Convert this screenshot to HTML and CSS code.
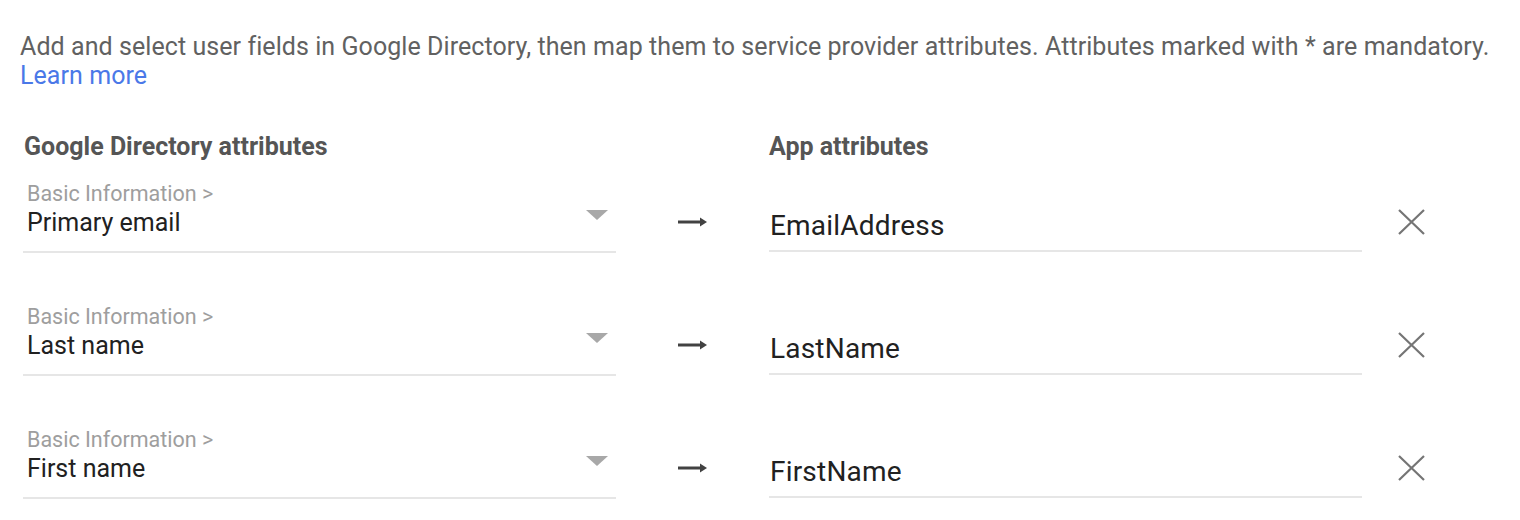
FILE: index.html
```html
<!DOCTYPE html>
<html lang="en">
<head>
<meta charset="utf-8">
<link rel="stylesheet" href="styles.css">
</head>
<body>
<div class="page">
  <p class="desc">Add and select user fields in Google Directory, then map them to service provider attributes. Attributes marked with * are mandatory.<br><a class="link" href="#">Learn more</a></p>
  <div class="grid">
    <div class="head">Google Directory attributes</div>
    <div></div>
    <div class="head head-right">App attributes</div>
    <div></div>

    <div class="select">
      <div class="sel-text">
        <div class="sel-label">Basic Information &gt;</div>
        <div class="sel-value">Primary email</div>
      </div>
      <span class="caret"></span>
    </div>
    <div class="arrow-cell"><svg class="arrow" width="30" height="12" viewBox="0 0 30 12"><path d="M0 6h24" stroke="#424242" stroke-width="3"/><path d="M22 1.5l7 4.5-7 4.5z" fill="#424242"/></svg></div>
    <div class="input"><span>EmailAddress</span></div>
    <div class="close-cell"><svg width="27" height="26" viewBox="0 0 27 26"><path d="M1 1L26 25M26 1L1 25" stroke="#757575" stroke-width="2.2"/></svg></div>

    <div class="select">
      <div class="sel-text">
        <div class="sel-label">Basic Information &gt;</div>
        <div class="sel-value">Last name</div>
      </div>
      <span class="caret"></span>
    </div>
    <div class="arrow-cell"><svg class="arrow" width="30" height="12" viewBox="0 0 30 12"><path d="M0 6h24" stroke="#424242" stroke-width="3"/><path d="M22 1.5l7 4.5-7 4.5z" fill="#424242"/></svg></div>
    <div class="input"><span>LastName</span></div>
    <div class="close-cell"><svg width="27" height="26" viewBox="0 0 27 26"><path d="M1 1L26 25M26 1L1 25" stroke="#757575" stroke-width="2.2"/></svg></div>

    <div class="select">
      <div class="sel-text">
        <div class="sel-label">Basic Information &gt;</div>
        <div class="sel-value">First name</div>
      </div>
      <span class="caret"></span>
    </div>
    <div class="arrow-cell"><svg class="arrow" width="30" height="12" viewBox="0 0 30 12"><path d="M0 6h24" stroke="#424242" stroke-width="3"/><path d="M22 1.5l7 4.5-7 4.5z" fill="#424242"/></svg></div>
    <div class="input"><span>FirstName</span></div>
    <div class="close-cell"><svg width="27" height="26" viewBox="0 0 27 26"><path d="M1 1L26 25M26 1L1 25" stroke="#757575" stroke-width="2.2"/></svg></div>
  </div>
</div>
</body>
</html>
```
FILE: styles.css
```css
html, body {
  margin: 0;
  padding: 0;
  background: #ffffff;
}
body {
  font-family: Roboto, "Noto Sans", Arial, sans-serif;
  width: 1520px;
  height: 520px;
  overflow: hidden;
}
.page {
  padding: 32px 0 0 20px;
}
.desc {
  margin: 0;
  font-size: 25px;
  line-height: 29px;
  color: #616161;
  letter-spacing: 0.07px;
  white-space: nowrap;
}
.link {
  color: #4a78e8;
  text-decoration: none;
}
.grid {
  margin-top: 43px;
  display: grid;
  grid-template-columns: 593px 153px 593px 1fr;
  margin-left: 3px;
}
.head {
  font-size: 25px;
  font-weight: 700;
  line-height: 28px;
  color: #555555;
  padding-left: 1px;
  margin-bottom: 22px;
}
.head-right {
  padding-left: 0;
}
.select {
  display: flex;
  align-items: flex-start;
  justify-content: space-between;
  padding: 0 8px 13px 4px;
  border-bottom: 2px solid #e6e6e6;
  margin-bottom: 53px;
}
.sel-label {
  font-size: 21.5px;
  line-height: 22px;
  color: #9e9e9e;
}
.sel-value {
  margin-top: 3px;
  font-size: 25px;
  line-height: 30px;
  color: #212121;
}
.caret {
  margin-top: 27px;
  width: 0;
  height: 0;
  border-left: 11px solid transparent;
  border-right: 11px solid transparent;
  border-top: 10px solid #a8a8a8;
}
.arrow-cell {
  display: flex;
  align-items: center;
  padding-left: 62px;
  margin-bottom: 53px;
  padding-top: 7px;
}
.input {
  align-self: end;
  margin-bottom: 54px;
  padding: 0 0 9px 1px;
  border-bottom: 2px solid #e6e6e6;
  font-size: 28px;
  line-height: 30px;
  color: #212121;
  letter-spacing: 0.2px;
}
.close-cell {
  display: flex;
  align-items: center;
  padding-left: 36px;
  margin-bottom: 53px;
  padding-top: 7px;
}
```
